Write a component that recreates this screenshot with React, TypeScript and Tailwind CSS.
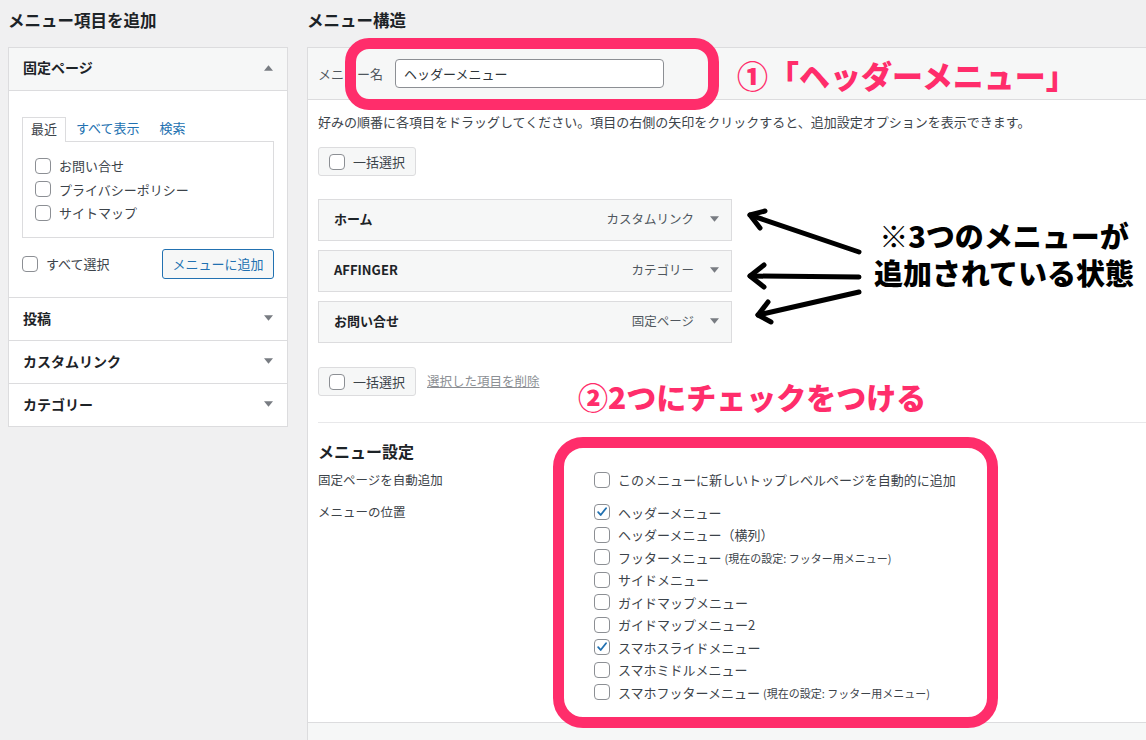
import React from "react";

function Check({ checked }: { checked?: boolean }) {
  return (
    <span className="flex h-4 w-4 shrink-0 items-center justify-center rounded-[4px] border border-[#8c8f94] bg-white">
      {checked && (
        <svg viewBox="0 0 20 20" className="h-[16px] w-[16px]">
          <path d="M4.5 10.2l3.6 4.1L15.8 4.6" stroke="#2271b1" strokeWidth="2.6" fill="none" strokeLinecap="round" strokeLinejoin="round" />
        </svg>
      )}
    </span>
  );
}

function Tri({ up }: { up?: boolean }) {
  return (
    <svg viewBox="0 0 10 6" className="h-[6px] w-[9px]">
      {up ? <polygon points="0,6 10,6 5,0" fill="#787c82" /> : <polygon points="0,0 10,0 5,6" fill="#787c82" />}
    </svg>
  );
}

const menuItems = [
  { title: "ホーム", type: "カスタムリンク" },
  { title: "AFFINGER", type: "カテゴリー" },
  { title: "お問い合せ", type: "固定ページ" },
];

const locations: { label: string; note?: string; checked?: boolean }[] = [
  { label: "ヘッダーメニュー", checked: true },
  { label: "ヘッダーメニュー（横列）" },
  { label: "フッターメニュー", note: "(現在の設定: フッター用メニュー)" },
  { label: "サイドメニュー" },
  { label: "ガイドマップメニュー" },
  { label: "ガイドマップメニュー2" },
  { label: "スマホスライドメニュー", checked: true },
  { label: "スマホミドルメニュー" },
  { label: "スマホフッターメニュー", note: "(現在の設定: フッター用メニュー)" },
];

function BulkSelect() {
  return (
    <div className="flex h-[29px] w-[98px] items-center gap-[8px] rounded-[3px] border border-[#dcdcde] bg-[#f6f7f7] px-[10px] text-[13px] text-[#3c434a]">
      <Check />
      <span>一括選択</span>
    </div>
  );
}

export default function App() {
  return (
    <div className="relative h-[740px] w-[1146px] overflow-hidden bg-[#f0f0f1] font-['Noto_Sans_CJK_JP',sans-serif] text-[#1d2327]">
      <div className="flex h-full">
        {/* left column */}
        <div className="ml-[8px] w-[280px] shrink-0">
          <h2 className="flex h-[47px] items-center pb-[6px] text-[16.5px] font-bold">メニュー項目を追加</h2>
          <div className="border border-[#dcdcde] bg-white">
            <div className="flex h-[43px] items-center justify-between border-b border-[#dcdcde] bg-[#f6f7f7] pb-[3px] pl-[14px] pr-[14px]">
              <span className="text-[14px] font-bold">固定ページ</span>
              <Tri up />
            </div>
            <div className="px-[13px] pb-[18px] pt-[25px]">
              <div className="flex h-[25px] items-end text-[13px]">
                <span className="relative top-[1px] flex h-[25px] items-center border border-b-0 border-[#dcdcde] bg-white px-[8px] pb-[2px] text-[#3c434a]">最近</span>
                <span className="ml-[10px] flex h-[25px] items-center pb-[2px] text-[#2271b1]">すべて表示</span>
                <span className="ml-[20px] flex h-[25px] items-center pb-[2px] text-[#2271b1]">検索</span>
              </div>
              <div className="h-[97px] border border-[#dcdcde] px-[12px] pt-[12px] text-[13px] text-[#3c434a]">
                {["お問い合せ", "プライバシーポリシー", "サイトマップ"].map((t) => (
                  <div key={t} className="flex h-[23.5px] items-center gap-[8px]">
                    <Check />
                    <span>{t}</span>
                  </div>
                ))}
              </div>
              <div className="mt-[11px] flex h-[30px] items-center justify-between">
                <div className="flex items-center gap-[8px] text-[13px] text-[#3c434a]">
                  <Check />
                  <span>すべて選択</span>
                </div>
                <div className="flex h-[30px] w-[112px] items-center justify-center rounded-[3px] border border-[#2271b1] bg-[#f6f7f7] text-[13px] text-[#2271b1]">
                  メニューに追加
                </div>
              </div>
            </div>
            {["投稿", "カスタムリンク", "カテゴリー"].map((t) => (
              <div key={t} className="flex h-[43px] items-center justify-between border-t border-[#dcdcde] pb-[2px] pl-[14px] pr-[14px]">
                <span className="text-[14px] font-bold">{t}</span>
                <Tri />
              </div>
            ))}
          </div>
        </div>

        {/* right column */}
        <div className="ml-[19px] flex min-w-0 flex-1 flex-col">
          <h2 className="flex h-[47px] shrink-0 items-center pb-[6px] text-[16.5px] font-bold">メニュー構造</h2>
          <div className="flex flex-1 flex-col border-l border-t border-[#dcdcde] bg-white">
            <div className="flex h-[52px] shrink-0 items-center border-b border-[#dcdcde] bg-[#f6f7f7] px-[10px]">
              <span className="text-[13px] text-[#50575e]">メニュー名</span>
              <div className="ml-[12px] flex h-[29px] w-[269px] items-center rounded-[4px] border border-[#8c8f94] bg-white px-[8px] text-[13px] text-[#2c3338]">
                ヘッダーメニュー
              </div>
            </div>
            <div className="px-[10px]">
              <p className="mt-[12px] text-[13px] leading-[20px] text-[#3c434a]">
                好みの順番に各項目をドラッグしてください。項目の右側の矢印をクリックすると、追加設定オプションを表示できます。
              </p>
              <div className="mt-[15px]">
                <BulkSelect />
              </div>
              <div className="mt-[23px] flex w-[414px] flex-col gap-[9px]">
                {menuItems.map((m) => (
                  <div key={m.title} className="flex h-[42px] items-center justify-between border border-[#dcdcde] bg-[#f6f7f7] pb-[2px] pl-[15px] pr-[12px]">
                    <span className="text-[13px] font-bold text-[#1d2327]">{m.title}</span>
                    <div className="flex items-center gap-[16px]">
                      <span className="text-[12.5px] text-[#50575e]">{m.type}</span>
                      <Tri />
                    </div>
                  </div>
                ))}
              </div>
              <div className="mt-[24px] flex items-center gap-[11px]">
                <BulkSelect />
                <span className="text-[12.5px] text-[#8c8f94] underline">選択した項目を削除</span>
              </div>
            </div>
            <div className="ml-[10px] mt-[26px] border-t border-[#e8e8ea]" />
            <div className="px-[10px]">
              <h3 className="mt-[16px] text-[16px] font-bold leading-[24px]">メニュー設定</h3>
              <div className="mt-[6px] flex">
                <div className="w-[276px] text-[12.5px] leading-[22px] text-[#3c434a]">固定ページを自動追加</div>
                <div className="flex h-[22px] items-center gap-[8px] text-[13px] text-[#3c434a]">
                  <Check />
                  <span>このメニューに新しいトップレベルページを自動的に追加</span>
                </div>
              </div>
              <div className="mt-[10px] flex">
                <div className="w-[276px] text-[12.5px] leading-[22px] text-[#3c434a]">メニューの位置</div>
                <div className="flex flex-col">
                  {locations.map((l) => (
                    <div key={l.label} className="flex h-[22.5px] items-center gap-[8px] text-[13px] text-[#3c434a]">
                      <Check checked={l.checked} />
                      <span>
                        {l.label}
                        {l.note && <span className="ml-[3px] text-[11px]">{l.note}</span>}
                      </span>
                    </div>
                  ))}
                </div>
              </div>
            </div>
            <div className="mt-[18px] flex-1 border-t border-[#dcdcde] bg-[#f6f7f7]" />
          </div>
        </div>
      </div>

      {/* annotations */}
      <div className="pointer-events-none absolute left-[345px] top-[38px] h-[72px] w-[374px] rounded-[24px] border-[11px] border-[#ff2d6b]" />
      <div className="pointer-events-none absolute left-[737px] top-[58px] whitespace-nowrap text-[31px] font-black leading-[34px] text-[#ff2d6b]">
        ①「ヘッダーメニュー」
      </div>
      <div className="pointer-events-none absolute left-[860px] top-[218px] w-[288px] text-center text-[29px] font-black text-black">
        <div className="leading-[34px]">※3つのメニューが</div>
        <div className="mt-[3px] leading-[34px]">追加されている状態</div>
      </div>
      <svg className="pointer-events-none absolute left-0 top-0" width="1146" height="740">
        <g stroke="#000" strokeWidth="5" strokeLinecap="round" strokeLinejoin="round" fill="none">
          <path d="M859 252L750 215" />
          <path d="M765 211L750 215L760 228" />
          <path d="M859 277L750 276" />
          <path d="M764 265L750 276L764 287" />
          <path d="M859 292L758 315" />
          <path d="M768 302L758 315L771 322" />
        </g>
      </svg>
      <div className="pointer-events-none absolute left-[578px] top-[379px] whitespace-nowrap text-[30px] font-black leading-[34px] text-[#ff2d6b]">
        ②2つにチェックをつける
      </div>
      <div className="pointer-events-none absolute left-[553px] top-[437px] h-[291px] w-[445px] rounded-[30px] border-[11px] border-[#ff2d6b]" />
    </div>
  );
}
